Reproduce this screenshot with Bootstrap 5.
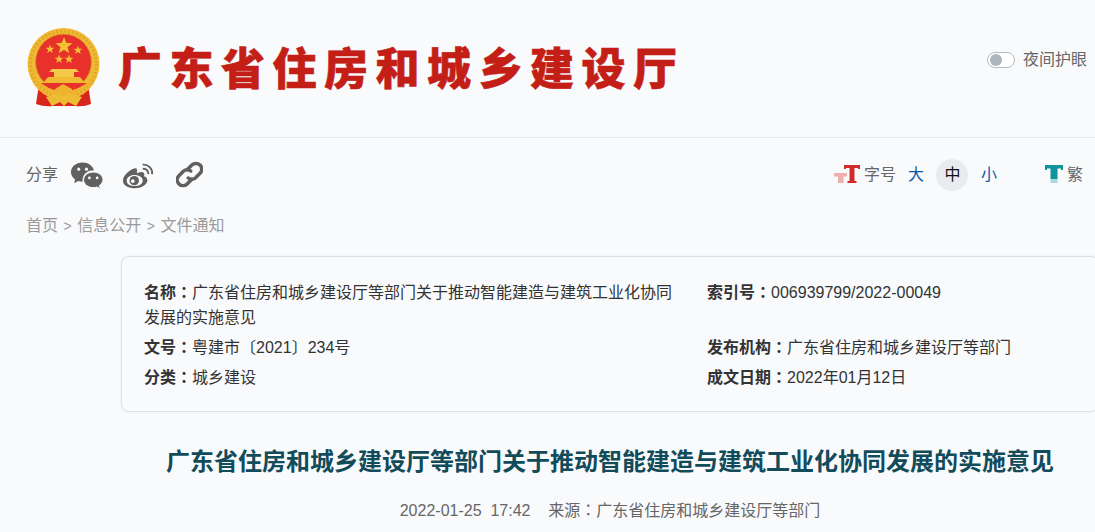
<!DOCTYPE html>
<html lang="zh-CN">
<head>
    <meta charset="UTF-8">
    <meta name="viewport" content="width=device-width, initial-scale=1.0">
    <title>广东省住房和城乡建设厅</title>
    <link rel="stylesheet" href="https://cdn.jsdelivr.net/npm/bootstrap@5.3.0/dist/css/bootstrap.min.css">
    <style>
        html, body { height: 532px; overflow: hidden; }
        body { background-color: #f9fafc; color: #333; font-family: "Liberation Sans", "Noto Sans CJK SC", sans-serif; font-size: 16px; }
        .site-head { height: 138px; border-bottom: 1px solid #e8e9eb; padding: 28px 8px 0 26px; }
        .site-emblem { width: 76px; height: 80px; flex: none; }
        .site-name { color: #c41f16; font-size: 44px; font-weight: 900; letter-spacing: 7.500px; line-height: 1; margin: 20px 0 0 16px; -webkit-text-stroke: .6px #c41f16; white-space: nowrap; }
        .night-box { margin-top: 24px; }
        .night-switch { width: 28px; height: 16px; border: 1px solid #b4b9be; border-radius: 8px; background: #fff; padding: 1px 2px; margin-right: 8px; }
        .night-knob { width: 12px; height: 12px; border-radius: 50%; background: #adb5bd; display: block; }
        .night-label { color: #666; font-size: 16px; line-height: 1; }
        .tool-row { height: 71px; padding: 2px 12px 0 26px; color: #666; }
        .tool-label { font-size: 16px; white-space: nowrap; }
        .share-icon { display: block; flex: none; fill: #606060; }
        .share-wechat { margin-left: 12px; }
        .share-weibo { margin-left: 19px; }
        .share-link { margin-left: 22px; }
        .size-link { color: #0a58a5; width: 32px; height: 32px; line-height: 32px; text-align: center; border-radius: 50%; text-decoration: none; margin-left: 4.500px; }
        .size-link.on { background: #e9ecef; color: #111; }
        .size-first { margin-left: 4px; }
        .trad-icon { margin-left: 40px; margin-right: 4px; }
        .crumbs { color: #9a9a9a; font-size: 16px; padding-left: 26px; line-height: 24px; margin-top: 5px; }
        .crumb-sep { font-size: 14px; margin: 0 5.500px; }
        .doc-wrap { width: 978px; margin-left: 121px; }
        .doc-info { margin-top: 18px; height: 156px; padding: 22px 22px 0; border: 1px solid #dfe0e2; border-radius: 8px; background: #f9fafc; box-shadow: 0 0 3px rgba(0,0,0,.06); line-height: 25px; }
        .info-line { display: flex; margin-bottom: 4px; }
        .info-left { width: 563px; flex: none; padding-right: 30px; }
        .info-key { font-weight: 700; }
        .info-colon { font-family: "Noto Sans CJK TC", sans-serif; font-feature-settings: "locl" 0; }
        .doc-title { color: #124b5a; font-size: 24px; font-weight: 700; line-height: 34px; text-align: center; margin: 33px 0 0; white-space: nowrap; }
        .doc-meta { color: #666; font-size: 16px; text-align: center; margin-top: 18px; line-height: 24px; }
    </style>
</head>
<body>

<!-- Header -->
<header class="site-head d-flex align-items-start">
    <svg class="site-emblem" viewBox="0 0 76 80">
        <path d="M14 50 L10 76 Q18 79 27 78 L49 78 Q58 79 65 76 L61 50 Z" fill="#d9261c"/>
        <circle cx="37.500" cy="36" r="36" fill="#f0bb34"/>
        <circle cx="37.500" cy="36" r="33" fill="none" stroke="#e2a52a" stroke-width="3" stroke-dasharray="2 2"/>
        <circle cx="37.500" cy="34" r="28" fill="#e7312a" stroke="#d99a22" stroke-width="1"/>
        <polygon points="38,9 40.200,14.800 46.500,15.200 41.600,19.100 43.200,25.200 38,21.800 32.800,25.200 34.400,19.100 29.500,15.200 35.800,14.800" fill="#f3c033"/>
        <polygon points="24,16.500 25.100,19.700 28.500,19.800 25.800,21.800 26.800,25 24,23.100 21.200,25 22.200,21.800 19.500,19.800 22.900,19.700" fill="#f3c033"/>
        <polygon points="52,17.500 53.100,20.700 56.500,20.800 53.800,22.800 54.800,26 52,24.100 49.200,26 50.200,22.800 47.500,20.800 50.900,20.700" fill="#f3c033"/>
        <polygon points="33,26.500 34.100,29.700 37.500,29.800 34.800,31.800 35.800,35 33,33.100 30.200,35 31.200,31.800 28.500,29.800 31.900,29.700" fill="#f3c033"/>
        <polygon points="43,26.500 44.100,29.700 47.500,29.800 44.800,31.800 45.800,35 43,33.100 40.200,35 41.200,31.800 38.500,29.800 41.900,29.700" fill="#f3c033"/>
        <path d="M26 41 H50 L53 44 L48 44 V49 H28 V44 H23 Z" fill="#f5c84a"/>
        <path d="M22 49 H54 L59 55 H17 Z" fill="#f0bb34"/>
        <path d="M15 55 H61 C56 62 48 66 38 66 C28 66 20 62 15 55 Z" fill="#e7312a"/>
        <path d="M10 51 Q37 76 66 51 L66 54 Q37 82 10 54 Z" fill="#eeb32e"/>
        <path d="M37 56 L46 61 L47 66 L28 66 L29 61 Z" fill="#eeb32e"/>
        <path d="M20 69 L33 65 L38 69 L43 65 L56 69 L50 78 L42 74 L38 78 L34 74 L26 78 Z" fill="#f0bb34"/>
    </svg>
    <h1 class="site-name">广东省住房和城乡建设厅</h1>
    <div class="ms-auto d-flex align-items-center night-box">
        <span class="night-switch d-block"><span class="night-knob"></span></span>
        <span class="night-label">夜间护眼</span>
    </div>
</header>

<!-- Share and font tools -->
<div class="tool-row d-flex align-items-center">
    <span class="tool-label">分享</span>
    <svg class="share-icon share-wechat" width="33" height="28" viewBox="0 0 34 28">
        <path d="M13 1 C6 1 1 5.500 1 11 C1 14.200 2.700 16.800 5.300 18.700 L4.200 22.500 L8.600 20.200 C10 20.700 11.400 20.900 13 21 C12.300 14 17 9 24.800 9 C23.500 4.500 18.800 1 13 1 Z"/>
        <path d="M24 11 C18.500 11 14 14.500 14 19 C14 23.500 18.500 27 24 27 C25.300 27 26.500 26.800 27.600 26.400 L31.400 28 L30.300 24.900 C32.500 23.300 34 21.300 34 19 C34 14.500 29.500 11 24 11 Z" stroke="#f9fafc" stroke-width="1"/>
        <circle cx="9" cy="8" r="1.600" fill="#f9fafc"/><circle cx="17" cy="8" r="1.600" fill="#f9fafc"/>
        <circle cx="20" cy="17" r="1.400" fill="#f9fafc"/><circle cx="28" cy="17" r="1.400" fill="#f9fafc"/>
    </svg>
    <svg class="share-icon share-weibo" width="32" height="28" viewBox="0 0 34 28">
        <path d="M13 7 C7 9 1 15 1 20 C1 25 7 28 14 28 C22 28 27 23 27 19.500 C27 17 25 15.800 23.500 15.300 C23 15.100 23.700 14.600 23.800 13.500 C24 11 21 10 16.500 12 C15.500 12.300 15.700 11.700 15.900 11 C16.500 8 15.500 6.200 13 7 Z M13 14 C18.500 14 22 16.500 22 20 C22 23.500 18 25.800 13.500 25.800 C8.500 25.800 5 23.500 5 20 C5 16.800 8.500 14 13 14 Z" fill-rule="evenodd"/>
        <circle cx="13" cy="20" r="5"/><circle cx="11.500" cy="20.500" r="2" fill="#f9fafc"/>
        <path d="M22 3 A9 9 0 0 1 32 13" fill="none" stroke="#606060" stroke-width="2"/>
        <path d="M22 7.500 A5 5 0 0 1 28 13" fill="none" stroke="#606060" stroke-width="2"/>
    </svg>
    <svg class="share-icon share-link" width="27" height="27" viewBox="2.500 2.500 23 23">
        <g fill="none" stroke="#606060" stroke-width="3" stroke-linecap="round">
            <path d="M12 10 L16 6 A4.600 4.600 0 0 1 23 13 L19 17 A4.600 4.600 0 0 1 13 17"/>
            <path d="M16 18 L12 22 A4.600 4.600 0 0 1 5 15 L9 11 A4.600 4.600 0 0 1 15 11"/>
        </g>
    </svg>

    <div class="ms-auto d-flex align-items-center">
        <svg width="26" height="20" viewBox="0 1 26 20" class="me-1">
            <path d="M0 9 H13 V12.500 H9.500 V19 H4 V12.500 H0 Z" fill="#edb0ad"/>
            <path d="M10 1 H26 V5 H24 V4 H20.500 V17 H22.500 V19 H13.500 V17 H15.500 V4 H12 V5 H10 Z" fill="#d22b2b"/>
        </svg>
        <span class="tool-label">字号</span>
        <a class="size-link size-first" href="#">大</a>
        <a class="size-link on" href="#">中</a>
        <a class="size-link" href="#">小</a>
        <svg width="18" height="20" viewBox="0 1 18 20" class="trad-icon">
            <path d="M0 1 H18 V6 H16 V4.500 H12.500 V15 H5.500 V4.500 H2 V6 H0 Z" fill="#10939a"/>
            <path d="M5.500 15 H12.500 V19 H5.500 Z" fill="#a9d9dc"/>
        </svg>
        <span class="tool-label">繁</span>
    </div>
</div>

<!-- Breadcrumb -->
<div class="crumbs">首页<span class="crumb-sep">&gt;</span>信息公开<span class="crumb-sep">&gt;</span>文件通知</div>

<div class="doc-wrap">
    <div class="doc-info">
        <div class="info-line">
            <div class="info-left"><span class="info-key">名称<span class="info-colon">：</span></span>广东省住房和城乡建设厅等部门关于推动智能建造与建筑工业化协同发展的实施意见</div>
            <div><span class="info-key">索引号<span class="info-colon">：</span></span>006939799/2022-00049</div>
        </div>
        <div class="info-line">
            <div class="info-left"><span class="info-key">文号<span class="info-colon">：</span></span>粤建市〔2021〕234号</div>
            <div><span class="info-key">发布机构<span class="info-colon">：</span></span>广东省住房和城乡建设厅等部门</div>
        </div>
        <div class="info-line">
            <div class="info-left"><span class="info-key">分类<span class="info-colon">：</span></span>城乡建设</div>
            <div><span class="info-key">成文日期<span class="info-colon">：</span></span>2022年01月12日</div>
        </div>
    </div>
    <h2 class="doc-title">广东省住房和城乡建设厅等部门关于推动智能建造与建筑工业化协同发展的实施意见</h2>
    <div class="doc-meta">2022-01-25&nbsp; 17:42&nbsp;&nbsp;&nbsp; 来源<span class="info-colon">：</span>广东省住房和城乡建设厅等部门</div>
</div>

<script src="https://cdn.jsdelivr.net/npm/bootstrap@5.3.0/dist/js/bootstrap.bundle.min.js"></script>
</body>
</html>
